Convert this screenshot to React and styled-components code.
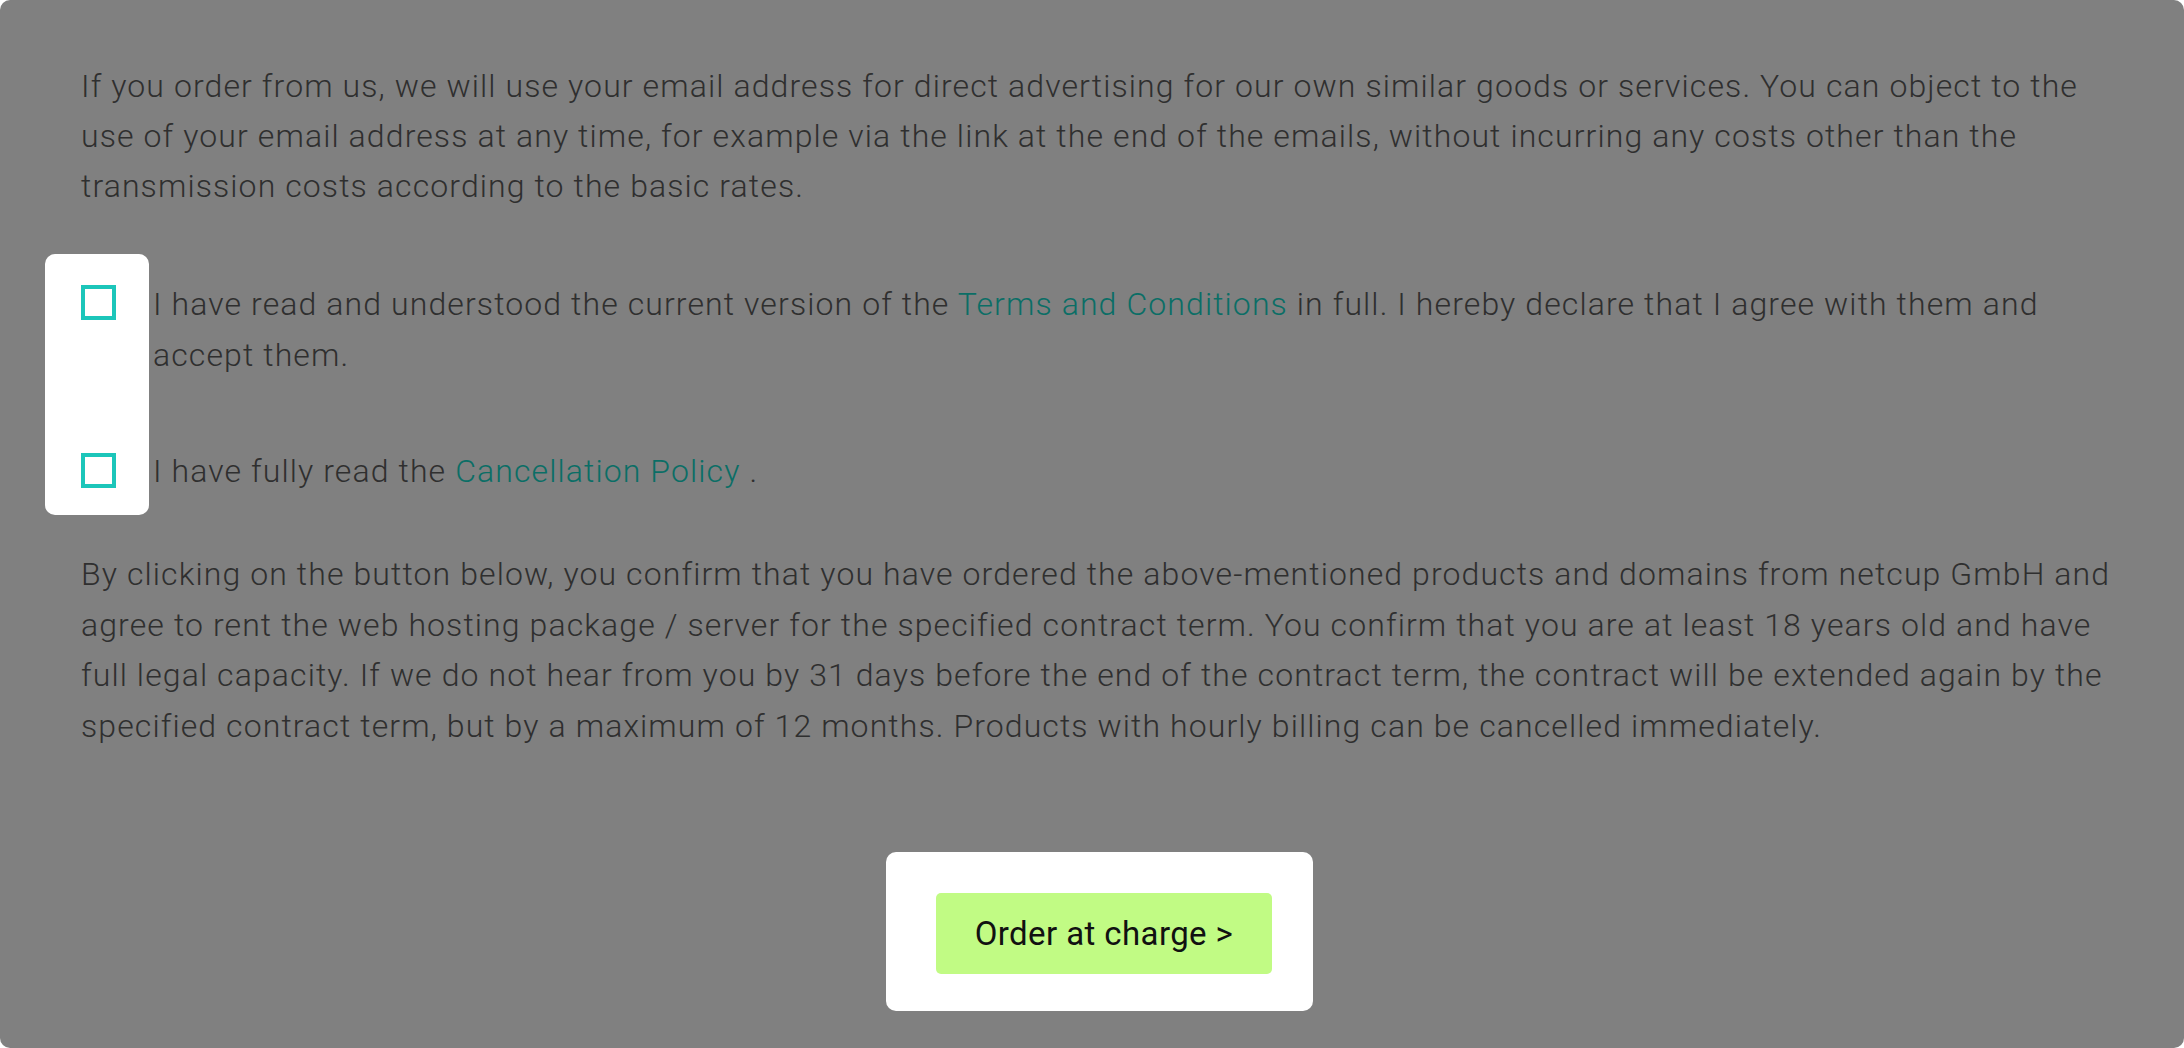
import React from "react"
import styled, { createGlobalStyle } from "styled-components"

// region styles
const GlobalStyle = createGlobalStyle`
  html, body {
    margin: 0;
    padding: 0;
    background: #ffffff;
  }
  body {
    font-family: Roboto, "Liberation Sans", sans-serif;
  }
`

// the dimmed page behind the highlighted parts
const Backdrop = styled.div`
  box-sizing: border-box;
  min-height: 100vh;
  background: #808080;
  border-radius: 10px;
  padding: 61px 60px 0 81px;
  color: #2f2f2f;
  font-size: 32px;
  font-weight: 300;
  letter-spacing: 1.1px;
  line-height: 50px;
`

const Paragraph = styled.p`
  margin: 0;
  line-height: ${props => props.$lh || "50px"};
`

const Link = styled.a`
  color: #0b6e66;
  text-decoration: none;
`

const Consents = styled.div`
  display: flex;
  flex-direction: row;
  align-items: flex-start;
  margin: 43px 0 34px -36px;
`

// white cut out round the checkboxes
const Spotlight = styled.div`
  display: flex;
  flex-direction: column;
  gap: 133px;
  background: #ffffff;
  border-radius: 10px;
  padding: 31px 33px 27px 36px;
`

const Checkbox = styled.span`
  display: block;
  box-sizing: border-box;
  width: 35px;
  height: 35px;
  border: 4px solid #1cc6ba;
  background: #ffffff;
`

const ConsentTexts = styled.div`
  display: flex;
  flex-direction: column;
  gap: 65px;
  padding: 25px 0 0 4px;
`

const ButtonRow = styled.div`
  display: flex;
  justify-content: center;
  padding: 100px 6px 0 0;
`

const ButtonSpotlight = styled.div`
  background: #ffffff;
  border-radius: 10px;
  padding: 41px 41px 37px 50px;
`

const OrderButton = styled.button`
  display: block;
  width: 336px;
  height: 81px;
  border: none;
  border-radius: 5px;
  background: #c1fb84;
  color: #111111;
  font-family: Roboto, "Liberation Sans", sans-serif;
  font-size: 33px;
  font-weight: 400;
  letter-spacing: 0.4px;
  cursor: pointer;
`
// endregion

const App = () => {
    return (
        <>
            <GlobalStyle/>
            <Backdrop>
                <Paragraph>
                    If you order from us, we will use your email address for direct advertising for our own similar
                    goods or services. You can object to the use of your email address at any time, for example via
                    the link at the end of the emails, without incurring any costs other than the transmission costs
                    according to the basic rates.
                </Paragraph>

                <Consents>
                    <Spotlight>
                        <Checkbox/>
                        <Checkbox/>
                    </Spotlight>
                    <ConsentTexts>
                        <Paragraph $lh="51px">
                            I have read and understood the current version of the <Link href="#">Terms and Conditions</Link> in
                            full. I hereby declare that I agree with them and accept them.
                        </Paragraph>
                        <Paragraph>
                            I have fully read the <Link href="#">Cancellation Policy</Link> .
                        </Paragraph>
                    </ConsentTexts>
                </Consents>

                <Paragraph $lh="50.7px">
                    By clicking on the button below, you confirm that you have ordered the above-mentioned products
                    and domains from netcup GmbH and agree to rent the web hosting package / server for the specified
                    contract term. You confirm that you are at least 18 years old and have full legal capacity. If we
                    do not hear from you by 31 days before the end of the contract term, the contract will be extended
                    again by the specified contract term, but by a maximum of 12 months. Products with hourly billing
                    can be cancelled immediately.
                </Paragraph>

                <ButtonRow>
                    <ButtonSpotlight>
                        <OrderButton>Order at charge &gt;</OrderButton>
                    </ButtonSpotlight>
                </ButtonRow>
            </Backdrop>
        </>
    )
}

export default App
